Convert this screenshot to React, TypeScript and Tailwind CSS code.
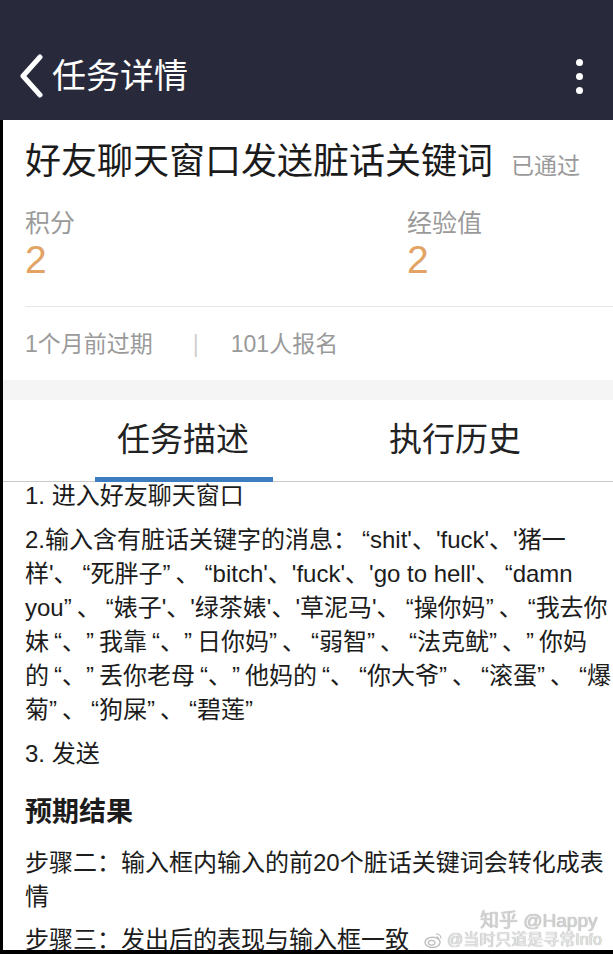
import { ReactNode } from 'react';

const STEP_TWO = [
  "2.输入含有脏话关键字的消息：“shit'、'fuck'、'猪一",
  "样'、“死胖子”、“bitch'、'fuck'、'go to hell'、“damn",
  "you”、“婊子'、'绿茶婊'、'草泥马'、“操你妈”、“我去你",
  '妹“、”我靠“、”日你妈”、“弱智”、“法克鱿”、”你妈',
  '的“、”丢你老母“、”他妈的“、“你大爷”、“滚蛋”、“爆',
  '菊”、“狗屎”、“碧莲”',
];

// the screenshot sets curly quotes wider than Latin ones
function spaceQuotes(line: string): ReactNode[] {
  return line.split(/([“”])/).map((part, i) => {
    if (part === '“') {
      return (
        <span key={i} className="inline-block w-[13px] text-right">
          {part}
        </span>
      );
    }
    if (part === '”') {
      return (
        <span key={i} className="inline-block w-[13px] text-left">
          {part}
        </span>
      );
    }
    return part;
  });
}

function Header() {
  return (
    <header className="h-[120px] bg-[#282a3b] flex items-center pt-[32px] pl-[18px] pr-[30px]">
      <svg width="26" height="44" viewBox="0 0 26 44" className="shrink-0">
        <polyline
          points="22,3 5,22 22,41"
          fill="none"
          stroke="#ffffff"
          strokeWidth="5"
          strokeLinecap="round"
          strokeLinejoin="round"
        />
      </svg>
      <h1 className="ml-[8px] text-[34px] leading-[40px] text-white">任务详情</h1>
      <div className="ml-auto flex flex-col gap-[7px]">
        <span className="w-[7px] h-[7px] rounded-full bg-white" />
        <span className="w-[7px] h-[7px] rounded-full bg-white" />
        <span className="w-[7px] h-[7px] rounded-full bg-white" />
      </div>
    </header>
  );
}

function Summary() {
  return (
    <section className="bg-white pt-[22px] pl-[22px]">
      <div className="flex items-baseline">
        <h2 className="text-[36px] leading-[40px] text-[#1b1b1b] whitespace-nowrap">好友聊天窗口发送脏话关键词</h2>
        <span className="ml-[18px] text-[23px] text-[#9a9a9a]">已通过</span>
      </div>

      <div className="grid grid-cols-[382px_1fr] mt-[24px]">
        <div>
          <div className="text-[25px] leading-[30px] text-[#9a9a9a]">积分</div>
          <div className="text-[39px] leading-[44px] text-[#e2a365]">2</div>
        </div>
        <div>
          <div className="text-[25px] leading-[30px] text-[#9a9a9a]">经验值</div>
          <div className="text-[39px] leading-[44px] text-[#e2a365]">2</div>
        </div>
      </div>

      <div className="mt-[24px] h-px bg-[#e6e6e6]" />

      <div className="flex items-center mt-[22px] pb-[21px] text-[23px] leading-[30px] text-[#9a9a9a]">
        <span>1个月前过期</span>
        <span className="ml-[40px] text-[#d0d0d0]">|</span>
        <span className="ml-[32px]">101人报名</span>
      </div>
    </section>
  );
}

function Tabs() {
  return (
    <div className="h-[82px] bg-white border-b border-[#c8c8c8] pl-[44px] grid grid-cols-[272px_272px]">
      <div className="relative flex items-center justify-center">
        <span className="text-[33px] text-[#222222]">任务描述</span>
        <span className="absolute bottom-[-1px] left-[48px] w-[178px] h-[5px] bg-[#3b7dbf]" />
      </div>
      <div className="flex items-center justify-center">
        <span className="text-[33px] text-[#222222]">执行历史</span>
      </div>
    </div>
  );
}

function Description() {
  return (
    <section className="bg-white pl-[22px] text-[24px] text-[#1c1c1c]">
      <p className="h-[28px] leading-[28px]">1. 进入好友聊天窗口</p>
      <div className="mt-[13px] whitespace-nowrap">
        {STEP_TWO.map((line, i) => (
          <div key={i} className="h-[34px] leading-[34px]">
            {spaceQuotes(line)}
          </div>
        ))}
      </div>
      <p className="mt-[10px] h-[34px] leading-[34px]">3. 发送</p>

      <h3 className="mt-[21px] h-[40px] text-[27px] leading-[40px] font-bold text-[#1c1c1c]">预期结果</h3>

      <div className="mt-[14px] whitespace-nowrap">
        <div className="h-[34px] leading-[34px]">步骤二：输入框内输入的前20个脏话关键词会转化成表</div>
        <div className="h-[34px] leading-[34px]">情</div>
      </div>
      <p className="mt-[9px] h-[34px] leading-[34px]">步骤三：发出后的表现与输入框一致</p>
    </section>
  );
}

function Watermark() {
  return (
    <>
      <div className="absolute left-[480px] top-[910px] text-[19px] leading-[22px] text-[#d2d2d2] [text-shadow:0_0_1px_#9a9a9a]">
        知乎 @Happy
      </div>
      <div className="absolute left-[424px] top-[929px] flex items-center gap-[4px] text-[16px] leading-[22px] text-[#e4e4e4] [text-shadow:0_0_1px_#8a8a8a]">
        <svg width="19" height="16" viewBox="0 0 20 17">
          <ellipse cx="9" cy="11" rx="8" ry="5.5" fill="none" stroke="#bdbdbd" strokeWidth="1.5" />
          <ellipse cx="8" cy="11.5" rx="3.5" ry="2.5" fill="none" stroke="#bdbdbd" strokeWidth="1.3" />
          <path d="M13 2 a5 5 0 0 1 5 5" fill="none" stroke="#bdbdbd" strokeWidth="1.3" />
          <path d="M13 5 a2.5 2.5 0 0 1 2.5 2.5" fill="none" stroke="#bdbdbd" strokeWidth="1.2" />
        </svg>
        <span>@当时只道是寻常Info</span>
      </div>
    </>
  );
}

export default function App() {
  return (
    <div className="relative w-[613px] h-[954px] overflow-hidden bg-black font-['Liberation_Sans','Noto_Sans_CJK_SC',sans-serif]">
      <Header />
      <div className="ml-[3px] h-[830px] overflow-hidden bg-white">
        <Summary />
        <div className="h-[20px] bg-[#f5f5f5]" />
        <Tabs />
        <Description />
      </div>
      <Watermark />
    </div>
  );
}
